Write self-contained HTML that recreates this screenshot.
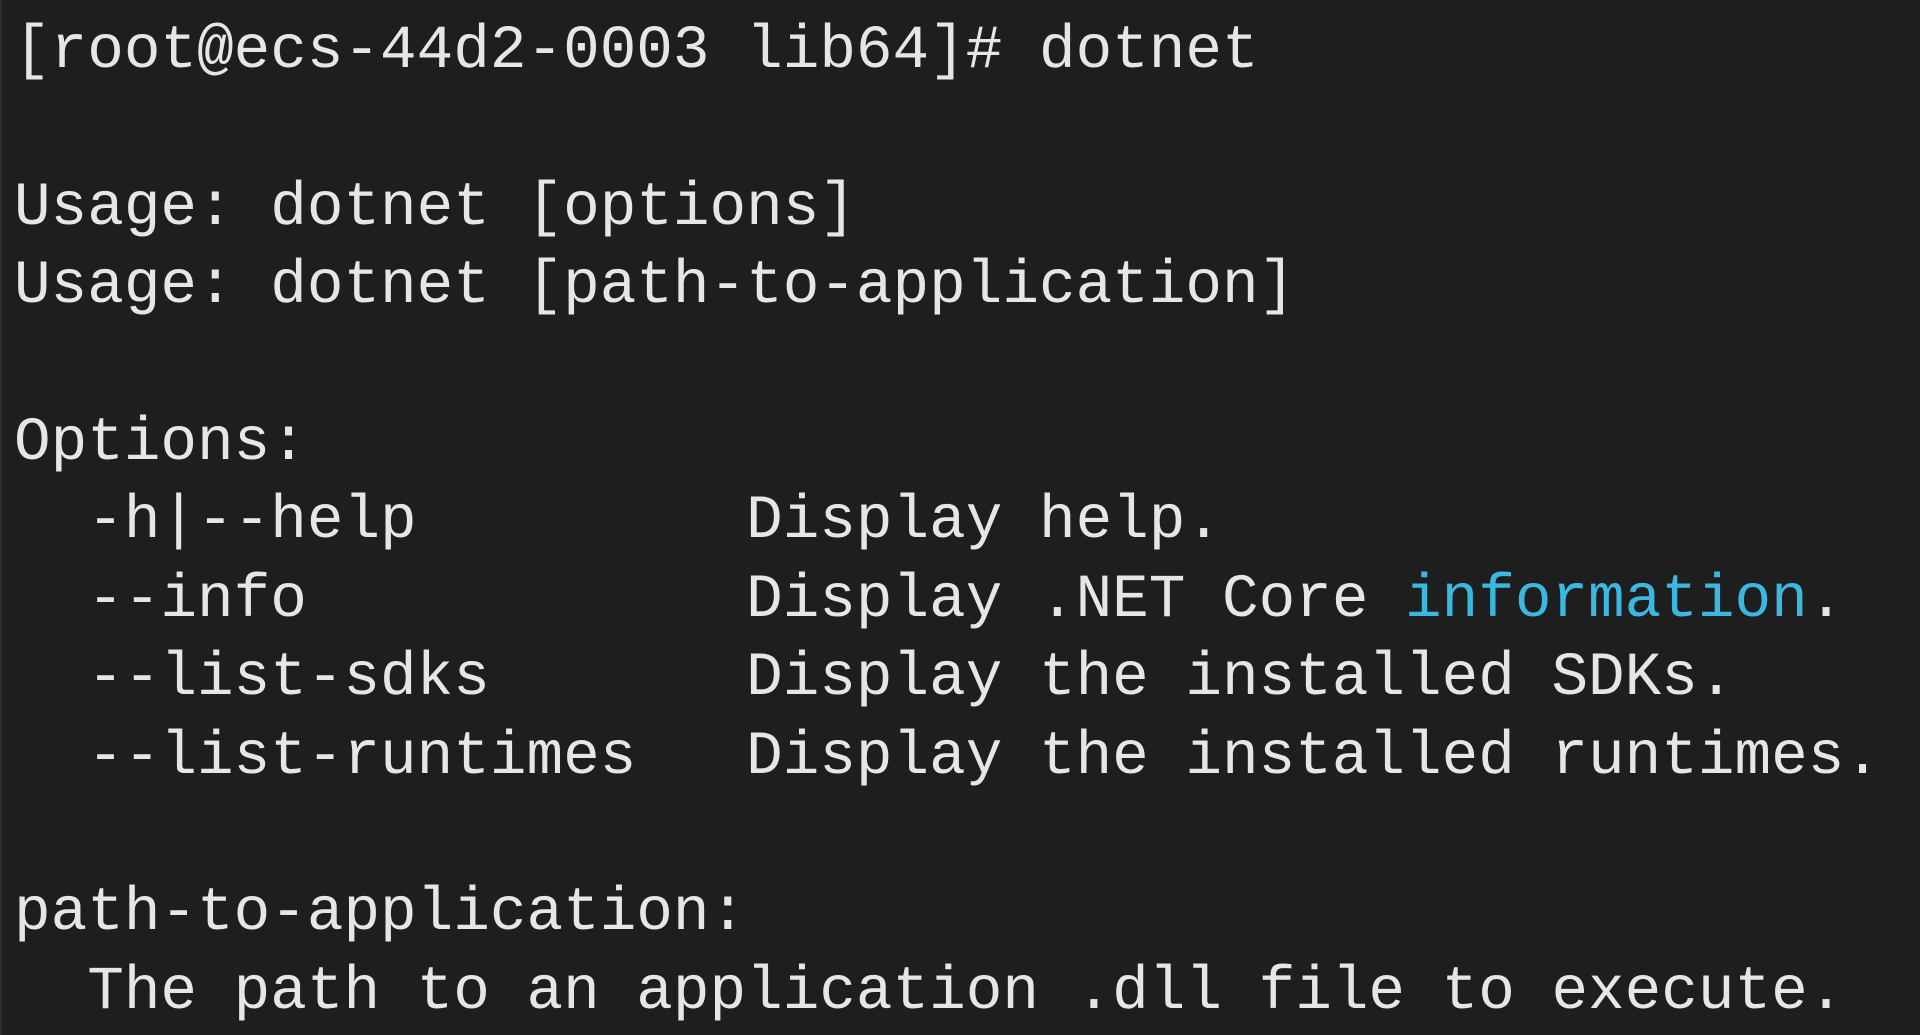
<!DOCTYPE html>
<html><head><meta charset="utf-8"><style>
html,body{margin:0;padding:0;background:#1e1e1e;width:1920px;height:1035px;overflow:hidden}
pre{margin:0;position:absolute;left:14px;top:13px;font-family:"Liberation Mono",monospace;font-size:61px;line-height:78.4px;color:#e6e6e6;letter-spacing:0px}
.c{color:#3ab8e0}
.edge{position:absolute;left:0;top:0;width:2px;height:1035px;background:#2c2c2c}
</style></head><body><div class="edge"></div><pre>[root@ecs-44d2-0003 lib64]# dotnet

Usage: dotnet [options]
Usage: dotnet [path-to-application]

Options:
  -h|--help         Display help.
  --info            Display .NET Core <span class="c">information</span>.
  --list-sdks       Display the installed SDKs.
  --list-runtimes   Display the installed runtimes.

path-to-application:
  The path to an application .dll file to execute.</pre></body></html>
